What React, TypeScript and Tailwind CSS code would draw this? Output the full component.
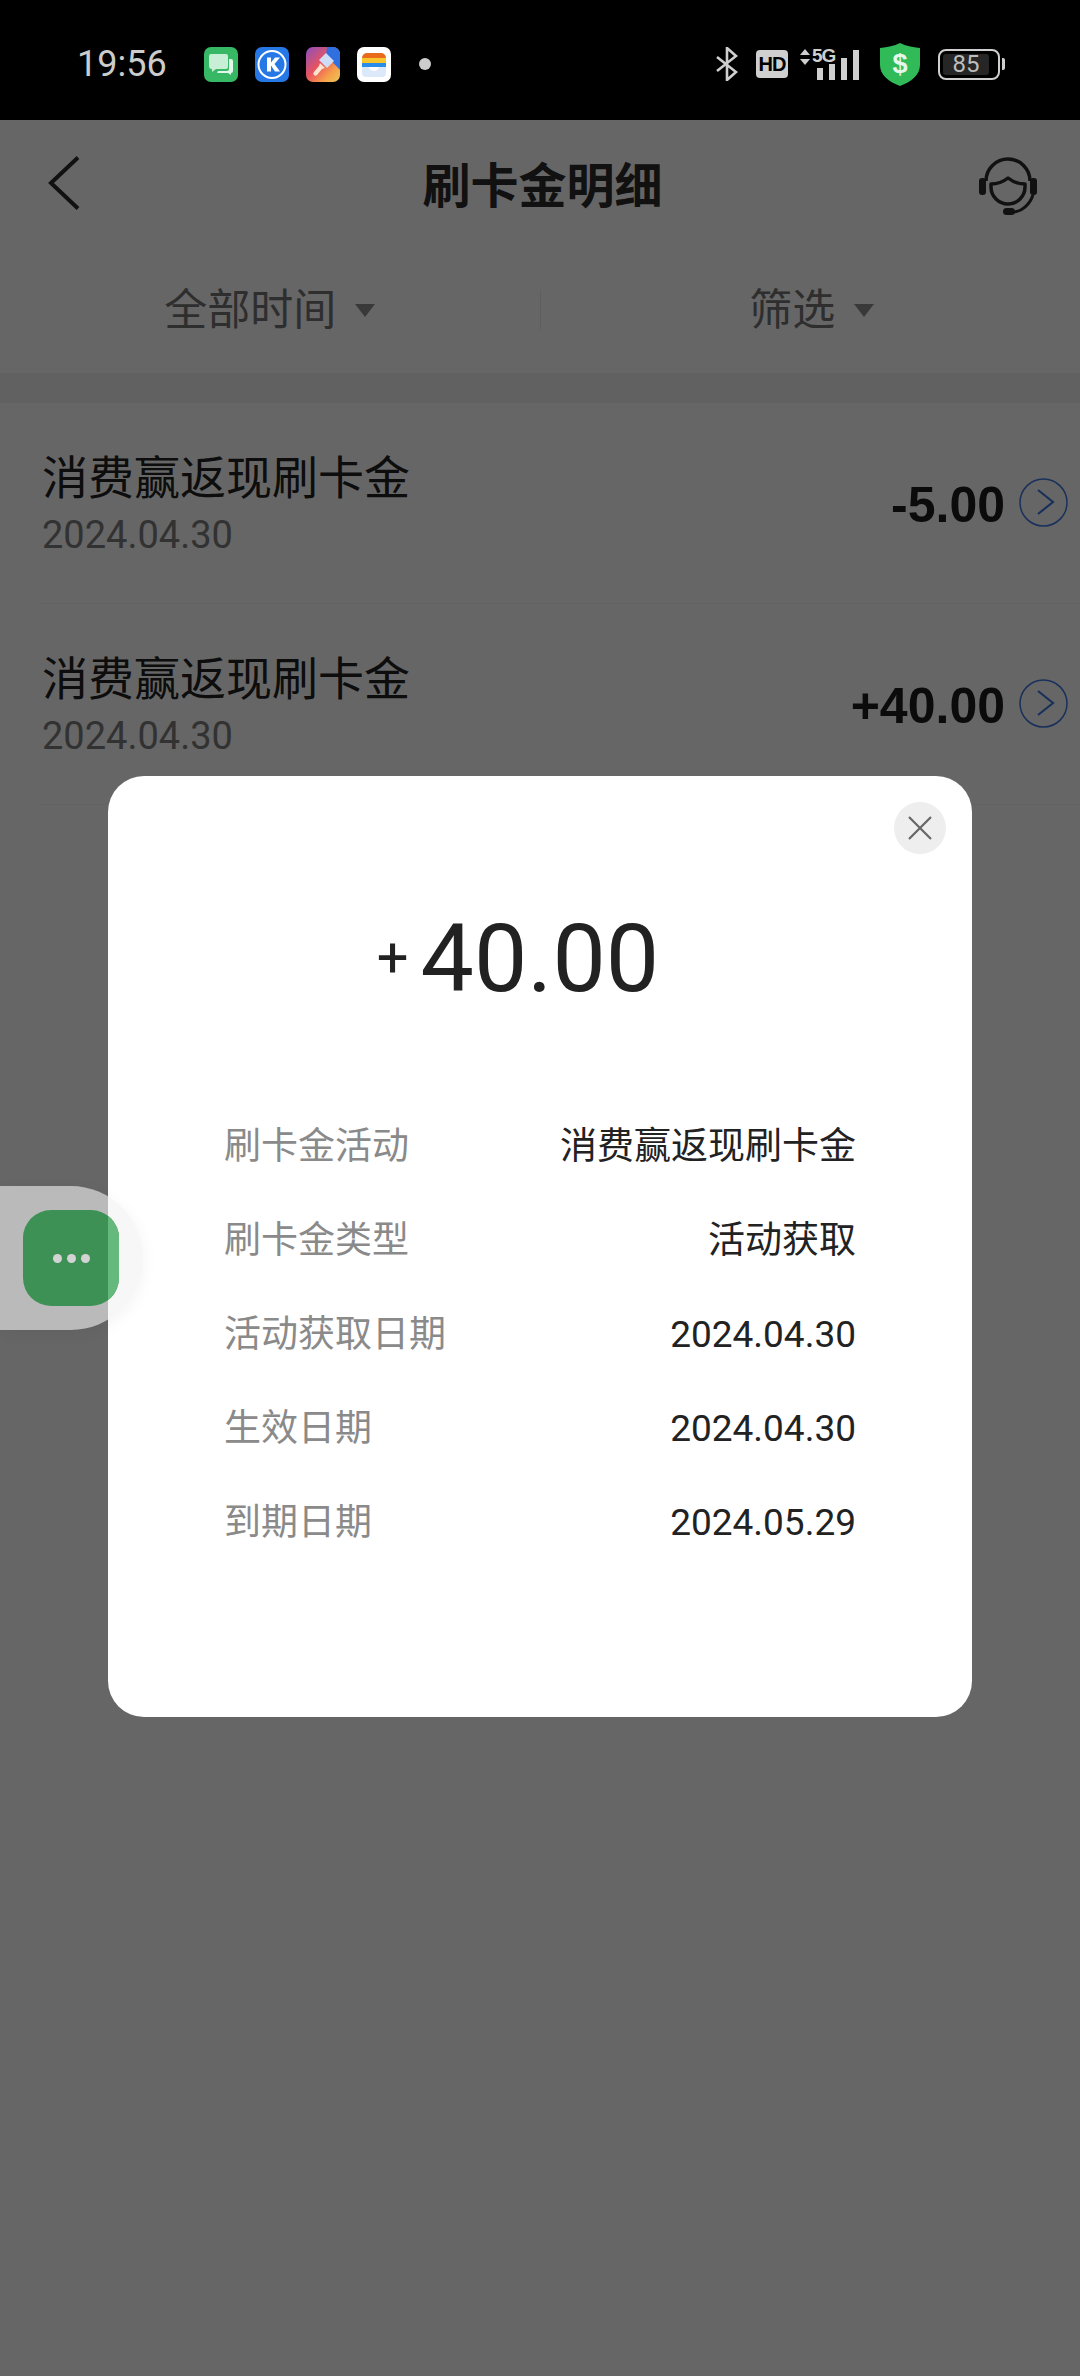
import React from "react";

const font = { fontFamily: "Roboto, 'Noto Sans CJK SC', sans-serif" };

function Caret() {
  return (
    <svg width="20" height="13" viewBox="0 0 20 13" className="ml-[19px]">
      <path d="M0 0H20L10 13Z" fill="#8f8f8f" />
    </svg>
  );
}

function AppIcons() {
  return (
    <div className="ml-[37px] flex items-center gap-[17px]">
      {/* messages */}
      <svg width="34" height="35" viewBox="0 0 34 35">
        <rect width="34" height="35" rx="7" fill="#37b865" />
        <path d="M7 7h15a2 2 0 0 1 2 2v11a2 2 0 0 1-2 2H12l-4 3v-3a3 3 0 0 1-3-3V9a2 2 0 0 1 2-2Z" fill="#c9eed6" />
        <path d="M25 12h2a2 2 0 0 1 2 2v10a2 2 0 0 1-2 2v2l-3-2H13l1-2h9a2 2 0 0 0 2-2Z" fill="#e4f7eb" />
      </svg>
      {/* K */}
      <svg width="34" height="35" viewBox="0 0 34 35">
        <rect width="34" height="35" rx="7" fill="#2678e6" />
        <circle cx="17" cy="17.5" r="13.5" fill="none" stroke="#fff" strokeWidth="2" />
        <path d="M12 10.5h4v5l4-5h5l-5.500 6.500 5.500 7.500h-5l-4-6v6h-4Z" fill="#fff" />
      </svg>
      {/* brush */}
      <svg width="34" height="35" viewBox="0 0 34 35">
        <defs>
          <linearGradient id="brushBg" x1="0" y1="0" x2="1" y2="1">
            <stop offset="0" stopColor="#8a4fc0" />
            <stop offset="0.45" stopColor="#e9545f" />
            <stop offset="0.75" stopColor="#f7a14a" />
            <stop offset="1" stopColor="#e8c85a" />
          </linearGradient>
        </defs>
        <rect width="34" height="35" rx="7" fill="url(#brushBg)" />
        <path d="M21 0h6a7 7 0 0 1 7 7v16L20 8Z" fill="#2f6fe0" />
        <path d="M20 6l8 8-7 7-8-8Z" fill="#cfdcf5" />
        <path d="M14 16l5 5-3 1-5 6a2 2 0 0 1-3-3l5-6Z" fill="#fbe3cf" />
      </svg>
      {/* wallet */}
      <svg width="34" height="35" viewBox="0 0 34 35">
        <rect width="34" height="35" rx="7" fill="#fff" />
        <path d="M5 11a5 5 0 0 1 5-5h14a5 5 0 0 1 5 5v0H5Z" fill="#ea6a1c" />
        <rect x="5" y="11" width="24" height="5" fill="#f7c52e" />
        <rect x="5" y="16" width="24" height="4" fill="#2a8ee8" />
        <path d="M5 20h7a5 4 0 0 0 10 0h7v6a4 4 0 0 1-4 4H9a4 4 0 0 1-4-4Z" fill="#dbe9fb" />
      </svg>
      <span className="ml-[11px] h-3 w-3 rounded-full bg-[#cccccc]" />
    </div>
  );
}

function StatusRight() {
  return (
    <div className="ml-auto flex items-center">
      <svg width="22" height="34" viewBox="0 0 22 34" fill="none" stroke="#cfcfcf" strokeWidth="2.600">
        <path d="M1 10l19 15-9 8V1l9 8L1 24" />
      </svg>
      <span className="ml-[18px] flex h-[28px] w-[32px] items-center justify-center rounded-[4px] bg-[#cfcfcf] text-[20px] font-bold leading-none tracking-[-1px] text-black" style={{ fontFamily: "'Liberation Sans', sans-serif" }}>
        HD
      </span>
      <div className="relative ml-[12px] h-[34px] w-[62px]">
        <svg width="62" height="34" viewBox="0 0 62 34" className="absolute inset-0">
          <path d="M0 8l5-6 5 6ZM0 12l5 6 5-6Z" fill="#cfcfcf" />
          <rect x="17" y="21" width="6" height="12" fill="#cfcfcf" />
          <rect x="29" y="17" width="6" height="16" fill="#cfcfcf" />
          <rect x="41" y="11" width="6" height="22" fill="#cfcfcf" />
          <rect x="53" y="3" width="6" height="30" fill="#cfcfcf" />
        </svg>
        <span className="absolute left-[12px] top-[-1px] text-[19px] font-bold leading-[20px] tracking-[-1px] text-[#cfcfcf]" style={{ fontFamily: "'Liberation Sans', sans-serif" }}>
          5G
        </span>
      </div>
      <svg width="40" height="43" viewBox="0 0 40 43" className="ml-[18px]">
        <path d="M20 0c6 3 12 4 20 5v17c0 10-9 17-20 21C9 39 0 32 0 22V5c8-1 14-2 20-5Z" fill="#31bb58" />
        <text x="20" y="30" textAnchor="middle" fontSize="27" fontWeight="700" fill="#e4f7ea" style={{ fontFamily: "'Liberation Sans', sans-serif" }}>$</text>
      </svg>
      <div className="ml-[18px] flex items-center">
        <div className="flex h-[31px] w-[62px] items-center rounded-[8px] border-2 border-[#cfcfcf] p-[3px]">
          <div className="flex h-full w-[46px] items-center justify-center rounded-[3px] bg-[#262626] text-[24px] leading-none text-[#bdbdbd]" style={{ fontFamily: "Roboto, sans-serif" }}>
            85
          </div>
        </div>
        <span className="ml-[2px] h-[12px] w-[3px] rounded-r-[2px] bg-[#cfcfcf]" />
      </div>
    </div>
  );
}

function HistoryRow({ amount }: { amount: string }) {
  return (
    <div className="ml-[42px] flex h-[201px] items-center border-b border-[#f4f4f4] pr-[12px]">
      <div>
        <div className="text-[46px] leading-[60px] text-[#222222]">消费赢返现刷卡金</div>
        <div className="mt-[4px] text-[38px] leading-[46px] text-[#7d7d7d]">2024.04.30</div>
      </div>
      <div className="ml-auto flex items-center pt-[3px]">
        <span className="text-[50px] font-bold leading-none text-[#1c1c1c]" style={{ fontFamily: "'Liberation Sans', sans-serif" }}>
          {amount}
        </span>
        <svg width="49" height="49" viewBox="0 0 49 49" fill="none" stroke="#3f78e0" className="ml-[14px] -mt-[4px]">
          <circle cx="24.500" cy="24.500" r="23.500" strokeWidth="1.500" />
          <path d="M19 12l15 12-15 12" strokeWidth="2.200" />
        </svg>
      </div>
    </div>
  );
}

function DetailRow({ label, value }: { label: string; value: string }) {
  return (
    <div className="flex h-[94px] items-center justify-between text-[37px]">
      <span className="text-[#8a8a8a]">{label}</span>
      <span className="text-[#222222]">{value}</span>
    </div>
  );
}

export default function App() {
  return (
    <div className="relative h-[2376px] w-[1080px] overflow-hidden bg-white" style={font}>
      <div className="relative z-20 flex h-[120px] items-center bg-black pl-[77px] pr-[75px] pt-[8px] text-[36px] text-[#cccccc]">
        <span className="leading-none">19:56</span>
        <AppIcons />
        <StatusRight />
      </div>

      <div className="grid h-[125px] grid-cols-[1fr_auto_1fr] items-center pl-[47px] pr-[42px] pt-[8px]">
        <svg width="32" height="54" viewBox="0 0 32 54" fill="none" stroke="#2b2b2b" strokeWidth="4" className="-mt-[8px] ml-[1px]">
          <path d="M30 1.500L3 27l27 25.500" />
        </svg>
        <span className="text-[48px] font-bold leading-none text-[#2b2b2b]">刷卡金明细</span>
        <svg width="60" height="60" viewBox="0 0 60 60" fill="none" stroke="#2b2b2b" className="justify-self-end">
          <path d="M8 24a22 22 0 0 1 44 0" strokeWidth="3.500" />
          <path d="M13 27c6 0 12-2 17-6 5 4 11 6 17 6v3a17 17 0 0 1-34 0Z" strokeWidth="3.500" strokeLinejoin="round" />
          <rect x="1" y="21" width="7" height="17" rx="3" fill="#2b2b2b" stroke="none" />
          <rect x="52" y="21" width="7" height="17" rx="3" fill="#2b2b2b" stroke="none" />
          <path d="M55 38c-3 9-11 17-20 17" strokeWidth="3" />
          <rect x="25" y="51" width="12" height="7" rx="3.500" fill="#2b2b2b" stroke="none" />
        </svg>
      </div>

      <div className="grid h-[128px] grid-cols-[1fr_1px_1fr] items-center pt-[3px] text-[43px] text-[#737373]">
        <div className="flex items-center justify-center">
          全部时间
          <Caret />
        </div>
        <div className="h-[40px] bg-[#ececec]" />
        <div className="flex items-center justify-center pl-[3px]">
          筛选
          <Caret />
        </div>
      </div>

      <div className="h-[30px] bg-[#f2f2f2]" />

      <HistoryRow amount="-5.00" />
      <HistoryRow amount="+40.00" />

      {/* dim layer */}
      <div className="absolute inset-0 z-10 bg-black/60" />

      {/* detail dialog */}
      <div className="absolute left-[108px] top-[776px] z-10 h-[941px] w-[864px] rounded-[36px] bg-white px-[116px]">
        <button className="absolute right-[26px] top-[26px] flex h-[52px] w-[52px] items-center justify-center rounded-full bg-[#eeeeee]">
          <svg width="24" height="24" viewBox="0 0 24 24" stroke="#666666" strokeWidth="2.200">
            <path d="M1 1l22 22M23 1L1 23" />
          </svg>
        </button>
        <div className="flex h-[324px] items-center justify-center pr-[44px] pt-[40px] text-[#222222]">
          <span className="mr-[12px] text-[56px] leading-none">+</span>
          <span className="text-[95px] leading-none">40.00</span>
        </div>
        <DetailRow label="刷卡金活动" value="消费赢返现刷卡金" />
        <DetailRow label="刷卡金类型" value="活动获取" />
        <DetailRow label="活动获取日期" value="2024.04.30" />
        <DetailRow label="生效日期" value="2024.04.30" />
        <DetailRow label="到期日期" value="2024.05.29" />
      </div>

      {/* floating menu button */}
      <div className="absolute left-0 top-[1186px] z-10 flex h-[144px] w-[143px] items-center overflow-hidden rounded-r-[72px] bg-[#f1f1f1]/60 pl-[23px] shadow-[0_4px_16px_rgba(0,0,0,0.05)]">
        <div className="relative flex h-[96px] w-[96px] items-center justify-center gap-[5px] overflow-hidden rounded-[28px] bg-[#3e9155]">
          <span className="absolute bottom-0 right-0 top-0 w-[11px] bg-[#66b97c]" />
          <span className="h-[9px] w-[9px] rounded-full bg-[#d3d3d3]" />
          <span className="h-[9px] w-[9px] rounded-full bg-[#d3d3d3]" />
          <span className="h-[9px] w-[9px] rounded-full bg-[#d3d3d3]" />
        </div>
      </div>
    </div>
  );
}
